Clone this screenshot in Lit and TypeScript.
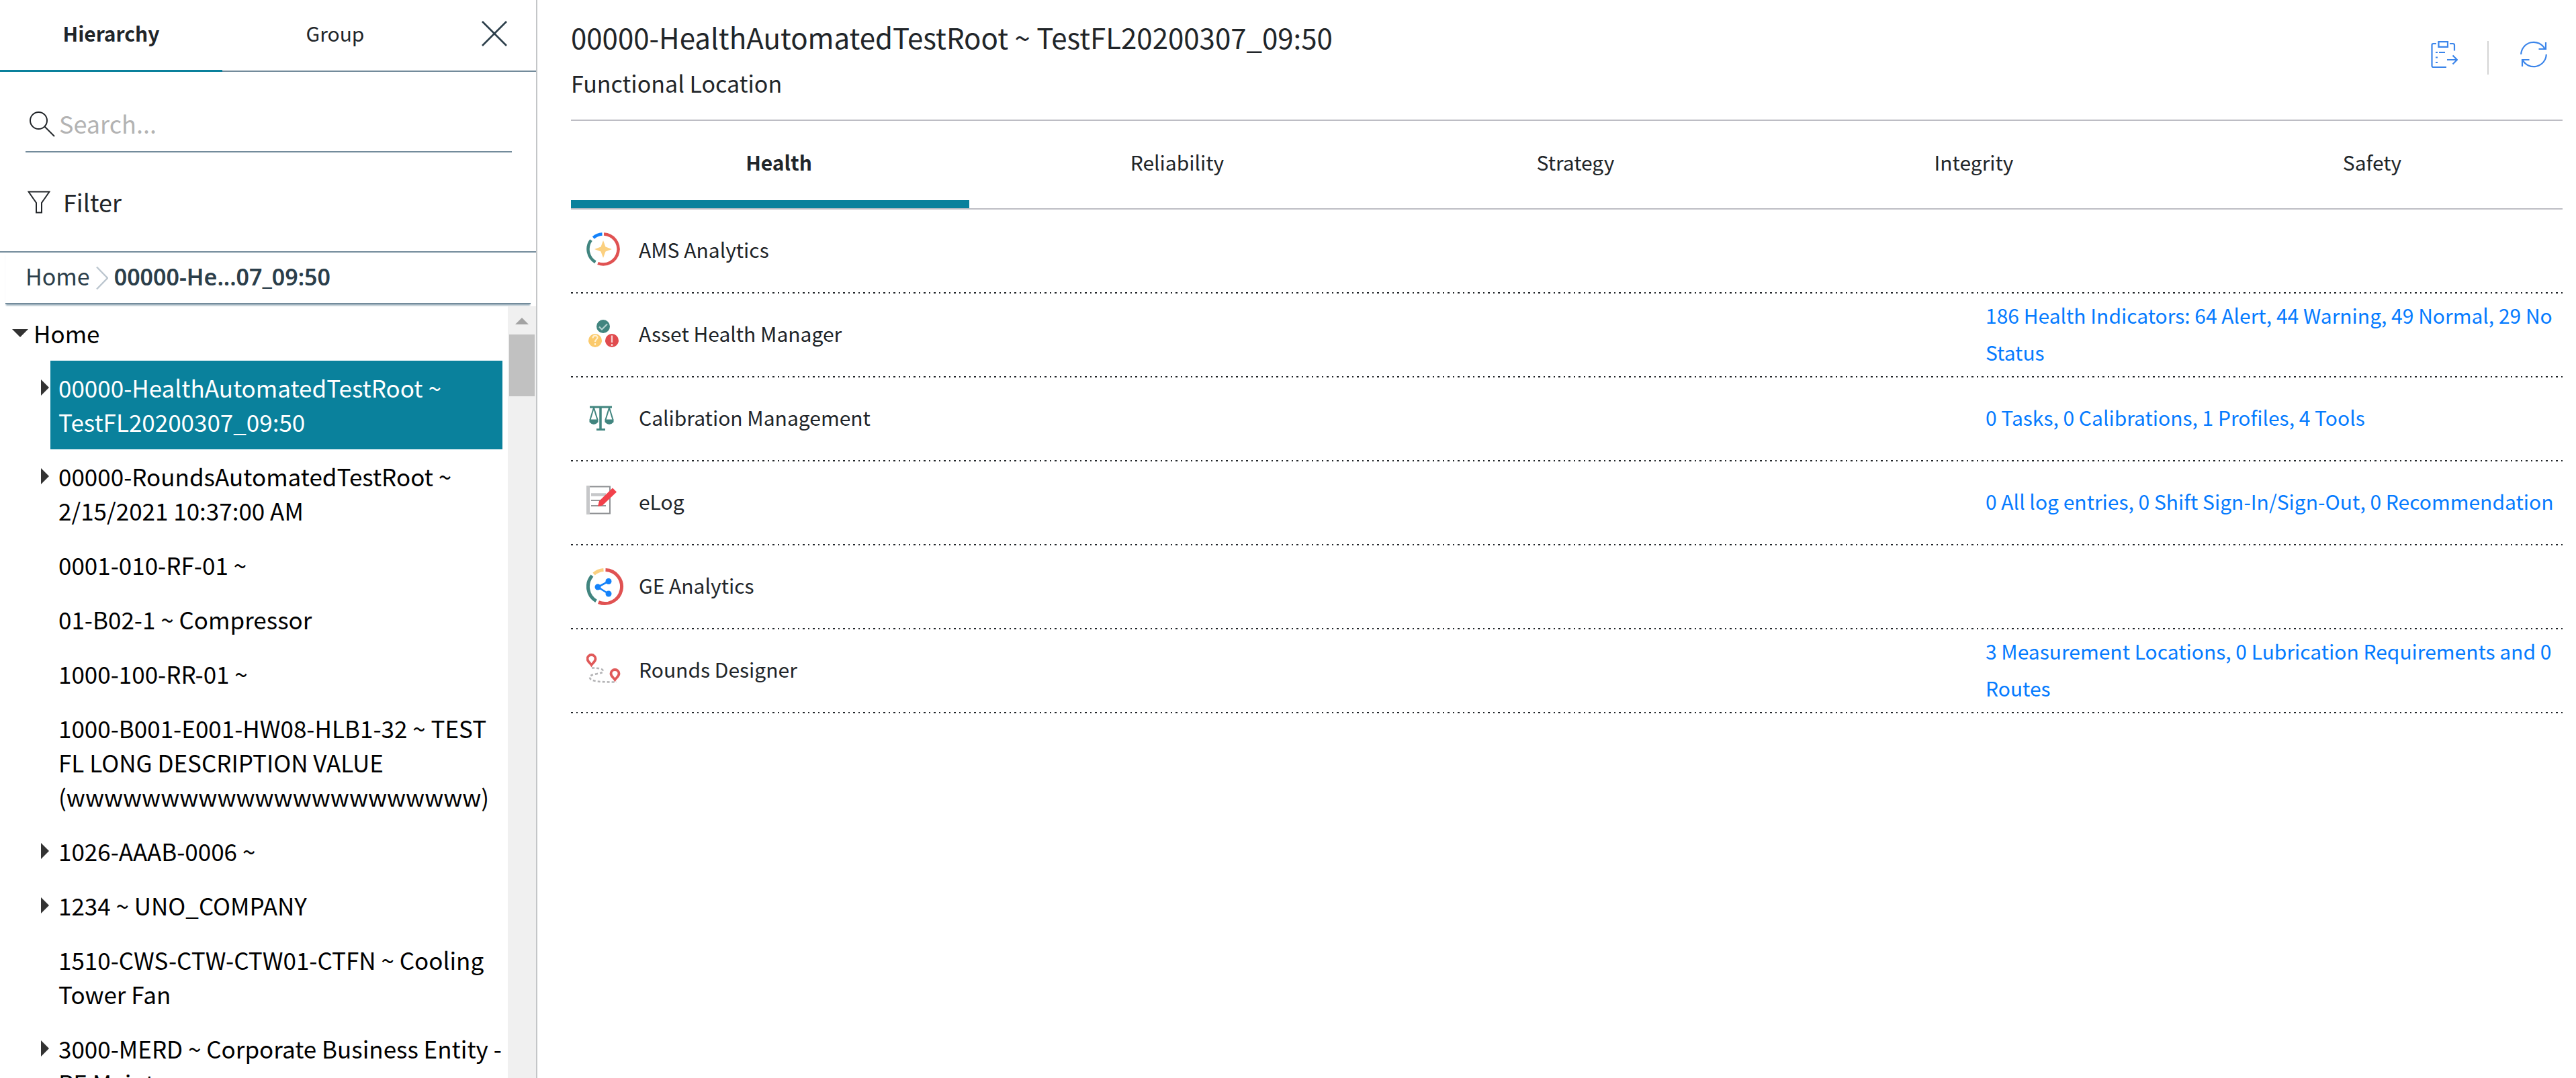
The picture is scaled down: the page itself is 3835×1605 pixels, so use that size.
import { LitElement, html, css, nothing, type TemplateResult } from "lit";
import { customElement, state } from "lit/decorators.js";

interface TreeNode { label: string; expandable?: boolean; }
interface Row { name: string; icon: TemplateResult; link?: string; }

const NODES: TreeNode[] = [
  { label: "00000-HealthAutomatedTestRoot ~ TestFL20200307_09:50", expandable: true },
  { label: "00000-RoundsAutomatedTestRoot ~ 2/15/2021 10:37:00 AM", expandable: true },
  { label: "0001-010-RF-01 ~" },
  { label: "01-B02-1 ~ Compressor" },
  { label: "1000-100-RR-01 ~" },
  { label: "1000-B001-E001-HW08-HLB1-32 ~ TEST FL LONG DESCRIPTION VALUE (wwwwwwwwwwwwwwwwwwwwww)" },
  { label: "1026-AAAB-0006 ~", expandable: true },
  { label: "1234 ~ UNO_COMPANY", expandable: true },
  { label: "1510-CWS-CTW-CTW01-CTFN ~ Cooling Tower Fan" },
  { label: "3000-MERD ~ Corporate Business Entity - RE Maint", expandable: true },
];

const amsIcon = html`<svg class="icon" width="56" height="56" viewBox="0 0 56 56" fill="none" stroke-width="4.500">
  <path d="M26 2.500A22.500 22.500 0 1 1 17 46" stroke="#e05252"/>
  <path d="M13.500 44.300A22.500 22.500 0 0 1 7 11.500" stroke="#41857f"/>
  <path d="M10.300 8A22.500 22.500 0 0 1 23.500 2.500" stroke="#1482fa"/>
  <path d="M25 12l3.500 9.500L38 25l-9.500 3.500L25 38l-3.500-9.500L12 25l9.500-3.500z" fill="#fbd080"/>
</svg>`;

const assetIcon = html`<svg class="icon" width="56" height="56" viewBox="0 1 56 56" fill="none">
  <circle cx="25" cy="16" r="10" fill="#41857f"/><path d="M19 16.500l4 4 8-8" stroke="#b5d3d0" stroke-width="2.200"/>
  <circle cx="13" cy="37" r="10" fill="#fbca6c"/>
  <path d="M9.500 33.500c0-5 7-5 7-1 0 3-3.500 2.500-3.500 6.500M13 41v3" stroke="#fff0d0" stroke-width="2.200"/>
  <circle cx="38" cy="37" r="10" fill="#e04b4e"/><path d="M38 29.500v10.500M38 42v3" stroke="#f8d0d0" stroke-width="2.400"/>
</svg>`;

const calibrationIcon = html`<svg class="icon" width="56" height="56" viewBox="0 2 56 56" fill="none" stroke="#41857f" stroke-width="2">
  <path d="M5 12h33" stroke-width="3"/><path d="M21 11v33" stroke-width="3.500"/><path d="M15 45.500h13" stroke-width="3"/>
  <path d="M11 13L5.500 31M11 13l5.500 18M34 13l-5.500 18M34 13l5.500 18"/>
  <path d="M4.500 30.500h13v4q-6.500 7-13 0zM27.500 30.500h13v4q-6.500 7-13 0z" fill="#41857f" stroke="none"/>
</svg>`;

const elogIcon = html`<svg class="icon" width="56" height="56" viewBox="0 5 56 56" fill="none">
  <path d="M1 8.500h34v40H1z" fill="#fff" stroke="#8f9194" stroke-width="2"/>
  <path d="M0 8h5v41H0z" fill="#c6c7c9"/>
  <path d="M7 20.500h22" stroke="#c6c7c9" stroke-width="4.500"/>
  <path d="M7 29h14M7 37h22" stroke="#939598" stroke-width="2.200"/>
  <path d="M39 10.500l6 6-21 20-7 1.500 2-8z" fill="#f2414b"/>
</svg>`;

const geIcon = html`<svg class="icon" width="56" height="56" viewBox="0 0 56 56" fill="none" stroke-width="5">
  <path d="M28.500 2.500A25 25 0 1 1 18 50.600" stroke="#e05252"/>
  <path d="M14.500 48.900A25 25 0 0 1 8.500 11.200" stroke="#41857f"/>
  <path d="M11 8.700A25 25 0 0 1 25.500 2.600" stroke="#fbd080"/>
  <path d="M33 19.500L17 28l16 10" stroke="#1482fa" stroke-width="2.600"/>
  <circle cx="33" cy="19.500" r="4.500" fill="#1482fa"/><circle cx="17" cy="28" r="4.500" fill="#1482fa"/><circle cx="33" cy="38" r="4.500" fill="#1482fa"/>
</svg>`;

const roundsIcon = html`<svg class="icon" width="56" height="56" viewBox="0 5 56 56" fill="none">
  <path d="M7.500 24c-2-3-6-5-6-9a6 6 0 0 1 12 0c0 4-4 6-6 9z" stroke="#e05a5a" stroke-width="3.800"/>
  <path d="M42.500 46c-2-3-6-5-6-9a6 6 0 0 1 12 0c0 4-4 6-6 9z" stroke="#e05a5a" stroke-width="3.800"/>
  <path d="M8 28.500c10 0 17 1 17 5s-20 3-20 9c0 7 20 7 40 7" stroke="#b4b4b6" stroke-width="2.600" stroke-dasharray="4 3"/>
</svg>`;

const ROWS: Row[] = [
  { name: "AMS Analytics", icon: amsIcon },
  { name: "Asset Health Manager", icon: assetIcon, link: "186 Health Indicators: 64 Alert, 44 Warning, 49 Normal, 29 No Status" },
  { name: "Calibration Management", icon: calibrationIcon, link: "0 Tasks, 0 Calibrations, 1 Profiles, 4 Tools" },
  { name: "eLog", icon: elogIcon, link: "0 All log entries, 0 Shift Sign-In/Sign-Out, 0 Recommendation" },
  { name: "GE Analytics", icon: geIcon },
  { name: "Rounds Designer", icon: roundsIcon, link: "3 Measurement Locations, 0 Lubrication Requirements and 0 Routes" },
];

const shared = css`
  * { box-sizing: border-box; }
  button { font: inherit; color: inherit; background: none; border: 0; padding: 0; margin: 0; text-align: inherit; cursor: pointer; }
  a { color: inherit; text-decoration: none; }
  svg { display: block; flex: none; }
`;

@customElement("hierarchy-panel")
export class HierarchyPanel extends LitElement {
  static styles = [shared, css`
    :host { display: flex; flex-direction: column; min-height: 0; border-right: 2px solid #c4c6c8; color: #212529; }
    .tabs { display: grid; grid-template-columns: 331fr 336fr 131fr; height: 107px; border-bottom: 2px solid #738b9b; }
    .tab { height: 107px; padding-bottom: 6px; text-align: center; font-size: 30px; border-bottom: 3px solid transparent; }
    .tab.active { font-weight: 700; border-bottom-color: #0a819c; }
    .close { display: flex; justify-content: center; align-items: center; padding: 0 0 7px 6px; }
    .search { display: flex; align-items: center; gap: 6px; margin: 38px 36px 0 38px; height: 82px; padding-left: 6px; border-bottom: 2px solid #738b9b; }
    .search input { flex: 1; min-width: 0; border: 0; outline: 0; background: none; font: inherit; font-size: 36px; padding: 0 0 4px; height: 64px; color: #212529; }
    .search input::placeholder { color: #b3b3b3; opacity: 1; }
    .filter { display: flex; align-items: center; gap: 19px; height: 149px; padding: 0 41px; font-size: 36px; border-bottom: 2px solid #738b9b; }
    .filter span { padding-bottom: 2px; }
    .crumbs { display: flex; align-items: center; gap: 9px; height: 77px; margin: 0 8px; padding-left: 30px; font-size: 34px; color: #2b3e4a; border-bottom: 2px solid #738b9b; box-shadow: 0 3px 2px -1px #9fb2be; }
    .crumbs a { padding-bottom: 6px; }
    .crumbs strong { font-family: "Noto Sans", sans-serif; font-weight: 600; padding-bottom: 4px; }
    .body { display: flex; flex: 1; min-height: 0; margin-top: 3px; }
    .tree { flex: 1; min-width: 0; overflow: hidden; font-size: 35px; line-height: 51px; color: #000; }
    .home { display: flex; align-items: center; gap: 7px; padding: 14px 0 16px 17px; }
    .items { list-style: none; margin: 0; padding: 0 8px 0 58px; }
    .item { display: flex; align-items: flex-start; }
    .twisty { width: 17px; padding: 28px 0 0 3px; flex: none; }
    .label { flex: 1; min-width: 0; padding: 14px 0 16px 12px; overflow-wrap: anywhere; }
    .item.selected .label { background: #0a819c; color: #fff; }
    .scroll { width: 42px; background: #f0f0f0; display: flex; flex-direction: column; align-items: center; padding-top: 17px; }
    .thumb { width: 38px; height: 92px; margin-top: 15px; background: #c1c1c1; }
  `];

  @state() private selected = 0;

  render() {
    return html`
      <div class="tabs" role="tablist">
        <button class="tab active" role="tab" aria-selected="true">Hierarchy</button>
        <button class="tab" role="tab" aria-selected="false">Group</button>
        <button class="close" aria-label="Close"><svg width="38" height="38" viewBox="0 0 38 38" stroke="#2b3e4a" stroke-width="2.600"><path d="M1 1l36 36M37 1L1 37"/></svg></button>
      </div>
      <label class="search">
        <svg width="38" height="38" viewBox="0 0 38 38" fill="none" stroke="#212529" stroke-width="2"><circle cx="13.500" cy="13.500" r="12.500"/><path d="M22.500 22.500L37 37"/></svg>
        <input type="search" placeholder="Search..." aria-label="Search">
      </label>
      <button class="filter">
        <svg width="34" height="34" viewBox="0 0 34 34" fill="none" stroke="#212529" stroke-width="2"><path d="M1.500 1.500h31L21 18v14.500h-8V18z"/></svg>
        <span>Filter</span>
      </button>
      <nav class="crumbs" aria-label="Breadcrumb">
        <a href="#home">Home</a>
        <svg width="18" height="36" viewBox="0 0 18 36" fill="none" stroke="#bcc6cf" stroke-width="2.400"><path d="M1 1.500L17 18 1 34.500"/></svg>
        <strong>00000-He...07_09:50</strong>
      </nav>
      <div class="body">
        <div class="tree">
          <button class="home">
            <svg width="26" height="12" viewBox="0 0 26 12" fill="#333"><path d="M1 0h24L13 12z"/></svg>
            <span>Home</span>
          </button>
          <ul class="items">
            ${NODES.map((n, i) => html`
              <li class="item ${i === this.selected ? "selected" : ""}">
                <span class="twisty">${n.expandable ? html`<svg width="12" height="24" viewBox="0 0 12 24" fill="#333"><path d="M0 0l12 12L0 24z"/></svg>` : nothing}</span>
                <button class="label" @click=${() => { this.selected = i; }}>${n.label}</button>
              </li>`)}
          </ul>
        </div>
        <div class="scroll" aria-hidden="true">
          <svg width="20" height="10" viewBox="0 0 20 10" fill="#a3a3a3"><path d="M10 0l10 10H0z"/></svg>
          <div class="thumb"></div>
        </div>
      </div>`;
  }
}

@customElement("asset-overview")
export class AssetOverview extends LitElement {
  static styles = [shared, css`
    :host { display: block; padding: 0 20px 0 50px; color: #212529; min-width: 0; }
    .head { display: flex; justify-content: space-between; height: 180px; padding-top: 23px; border-bottom: 2px solid #bdbdc4; }
    h1 { margin: 0; font-size: 42px; line-height: 64px; font-weight: 400; }
    h2 { margin: 0; font-size: 34px; line-height: 74px; font-weight: 400; }
    .actions { display: flex; align-items: flex-start; padding: 38px 23px 0 0; }
    .rule { width: 2px; height: 50px; margin: 0 47px 0 44px; background: #d4d4d4; }
    .tabs { display: flex; height: 132px; border-bottom: 2px solid #bdbdc4; }
    .tab { flex: 1 1 0; padding: 4px 0 0 26px; text-align: center; font-size: 30px; border-bottom: 12px solid transparent; }
    .tab.active { font-weight: 700; border-bottom-color: #0a819c; }
    table { width: 100%; border-spacing: 0; table-layout: fixed; font-size: 30px; }
    tr { background: repeating-linear-gradient(to right, #212529 0 3px, transparent 3px 8px, #212529 8px 10px, transparent 10px 15px) left bottom / 100% 2px no-repeat; }
    td { height: 125px; padding: 0 0 2px; vertical-align: middle; }
    .name { display: flex; align-items: center; gap: 22px; padding-left: 23px; }
    .name span { padding-bottom: 5px; }
    .facts { width: 859px; padding-bottom: 6px; color: #057bff; line-height: 55px; }
  `];

  render() {
    return html`
      <header class="head">
        <div><h1>00000-HealthAutomatedTestRoot ~ TestFL20200307_09:50</h1><h2>Functional Location</h2></div>
        <div class="actions">
          <button aria-label="Send to"><svg width="40" height="40" viewBox="0 0 40 40" fill="none" stroke="#3b85ea" stroke-width="2.200">
            <path d="M8 4H3.500Q1.500 4 1.500 6v31q0 2 2 2h19.500M28 4h4.500Q35 4 35 6v8.500"/><path d="M11.500 1.200h13.500v7.600H11.500z"/>
            <path d="M12 17h9M7 17h3M7 24.500h3M7 32h3"/><path d="M24 28h15M32.500 21.500L39 28l-6.500 6.500"/></svg></button>
          <span class="rule"></span>
          <button aria-label="Refresh"><svg width="40" height="40" viewBox="0 0 40 40" fill="none" stroke="#3b85ea" stroke-width="2.200">
            <path d="M1.200 20a18.800 18.800 0 0 1 35.500-8M38.800 20a18.800 18.800 0 0 1-35.500 8"/><path d="M38 2v10H27.500M3 38V28h10.500"/></svg></button>
        </div>
      </header>
      <div class="tabs" role="tablist">
        ${["Health", "Reliability", "Strategy", "Integrity", "Safety"].map((t, i) => html`
          <button class="tab ${i === 0 ? "active" : ""}" role="tab" aria-selected=${i === 0}>${t}</button>`)}
      </div>
      <table>
        <tbody>
          ${ROWS.map(r => html`<tr>
            <td><div class="name">${r.icon}<span>${r.name}</span></div></td>
            <td class="facts">${r.link ? html`<a href="#details">${r.link}</a>` : nothing}</td>
          </tr>`)}
        </tbody>
      </table>`;
  }
}

@customElement("app-root")
export class AppRoot extends LitElement {
  static styles = css`
    :host { display: grid; grid-template-columns: 800px minmax(0, 1fr); grid-template-rows: minmax(0, 1fr); height: 100vh; overflow: hidden; background: #fff; font-family: "Noto Sans CJK SC", "Noto Sans", sans-serif; }
  `;
  render() {
    return html`<hierarchy-panel></hierarchy-panel><asset-overview></asset-overview>`;
  }
}
